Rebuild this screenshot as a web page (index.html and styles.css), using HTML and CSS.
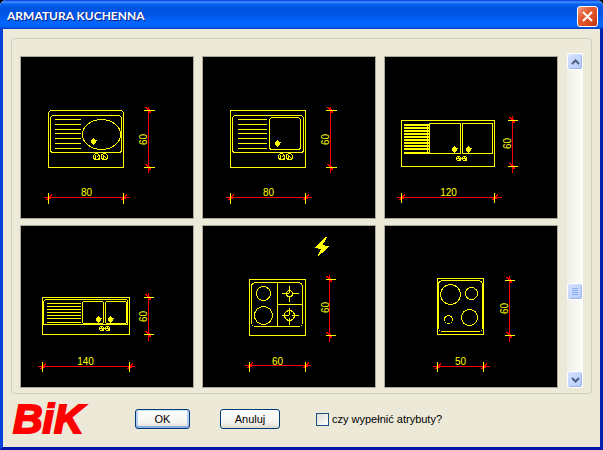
FILE: index.html
```html
<!DOCTYPE html>
<html lang="pl">
<head>
  <meta charset="UTF-8">
  <meta name="viewport" content="width=device-width, initial-scale=1">
  <title>ARMATURA KUCHENNA</title>
  <link rel="stylesheet" href="styles.css">
</head>
<body>

  <!-- shared drawing symbols -->
  <svg class="symbols" width="0" height="0" aria-hidden="true">
    <defs>
      <g id="drain">
        <path d="M0 -3V4M-1 -2V3M1 -2V3M-2 -1V2M-3 0H3M2 -1V2" />
      </g>
      <g id="taps">
        <circle cx="-4" cy="0" r="3" />
        <circle cx="4" cy="0" r="3" />
        <path d="M-5 -2V2M-4 1L-2 -1M3 -2V2M4 0L6 2M-1 -2V3M1 -3V2" />
      </g>
      <g id="taps-small">
        <circle cx="-3" cy="0" r="2" />
        <circle cx="3" cy="0" r="2" />
        <path d="M-5 0H5M-4 -2L-1 2M2 -2L5 2M-4 2H-1M2 2H5" />
      </g>
      <g id="tick">
        <path d="M-3 3L3 -3M-2 3L3 -2M-2 1H2" />
      </g>
      <g id="tick-v">
        <path d="M-3 -3L3 3M-2 -3L3 2M1 -2V2" />
      </g>
    </defs>
  </svg>

  <div class="window">
    <header class="titlebar">
      <h1 class="title">ARMATURA KUCHENNA</h1>
      <button type="button" class="close" aria-label="Zamknij">
        <svg width="19" height="19" viewBox="0 0 19 19"><path d="M5 5L14 14M14 5L5 14" /></svg>
      </button>
    </header>

    <main class="content">
      <div class="group">
        <div class="tiles">

          <div class="tile">
            <svg viewBox="0.5 0.5 172 161">
              <path d="M28 111V56L30 54H101L103 56V111Z" />
              <rect x="30" y="59" width="71" height="37" rx="3" />
              <path d="M34 63H60M34 68H60M34 73H60M34 77H60M34 82H60M34 87H60M34 92H60" />
              <ellipse cx="81" cy="78" rx="19" ry="15" />
              <use href="#drain" x="73" y="84" />
              <use href="#taps" x="80" y="100" />
              <g class="dim">
                <path d="M23 141H109M128 50V116" />
                <use href="#tick" x="28" y="141" /><use href="#tick" x="103" y="141" />
                <use href="#tick-v" x="128" y="54" /><use href="#tick-v" x="128" y="111" />
              </g>
              <path d="M28 136V147M103 136V147M123 54H134M123 111H134" />
              <text x="66" y="139">80</text>
              <text transform="translate(126 83) rotate(-90)">60</text>
            </svg>
          </div>

          <div class="tile">
            <svg viewBox="0.5 0.5 172 161">
              <rect x="28" y="54" width="75" height="57" />
              <rect x="30" y="59" width="71" height="37" rx="3" />
              <path d="M35 63H64M35 68H64M35 73H64M35 77H64M35 82H64M35 87H64M35 92H64" />
              <rect x="67" y="61" width="31" height="32" rx="3" />
              <use href="#drain" x="75" y="86" />
              <use href="#taps" x="83" y="100" />
              <g class="dim">
                <path d="M23 141H109M128 50V116" />
                <use href="#tick" x="28" y="141" /><use href="#tick" x="103" y="141" />
                <use href="#tick-v" x="128" y="54" /><use href="#tick-v" x="128" y="111" />
              </g>
              <path d="M28 136V147M103 136V147M123 54H134M123 111H134" />
              <text x="66" y="139">80</text>
              <text transform="translate(126 83) rotate(-90)">60</text>
            </svg>
          </div>

          <div class="tile">
            <svg viewBox="0.5 0.5 172 161">
              <rect x="17" y="64" width="93" height="46" />
              <path class="bars" d="M19 68.500H44M19 71.500H44M19 74.500H44M19 77.500H44M19 80.500H44M19 83.500H44M19 86.500H44M19 89.500H44M19 92.500H44M19 96.500H44" />
              <path d="M43 68V97" />
              <rect x="45" y="67" width="31" height="30" rx="1" />
              <rect x="78" y="67" width="30" height="30" rx="1" />
              <use href="#drain" x="70" y="92" />
              <use href="#drain" x="84" y="92" />
              <use href="#taps-small" x="77" y="102" />
              <g class="dim">
                <path d="M12 141H117M128 59V116" />
                <use href="#tick" x="17" y="141" /><use href="#tick" x="110" y="141" />
                <use href="#tick-v" x="128" y="64" /><use href="#tick-v" x="128" y="110" />
              </g>
              <path d="M17 136V146M110 136V146M123 64H133M123 110H133" />
              <text x="64" y="139">120</text>
              <text transform="translate(126 87) rotate(-90)">60</text>
            </svg>
          </div>

          <div class="tile">
            <svg viewBox="0.5 0.5 172 161">
              <rect x="22" y="72" width="87" height="37" />
              <path d="M23 99V76L25 74H106L107 75V99Z" />
              <path d="M26 78H60M26 81H60M26 84H60M26 87H60M26 90H60M26 93H60M26 97H60" />
              <rect x="62" y="76" width="21" height="22" rx="2" />
              <rect x="85" y="76" width="21" height="22" rx="2" />
              <use href="#drain" x="78" y="93" />
              <use href="#drain" x="90" y="93" />
              <use href="#taps-small" x="84" y="103" />
              <g class="dim">
                <path d="M17 141H114M128 67V115" />
                <use href="#tick" x="22" y="141" /><use href="#tick" x="109" y="141" />
                <use href="#tick-v" x="128" y="72" /><use href="#tick-v" x="128" y="109" />
              </g>
              <path d="M22 136V146M109 136V146M123 72H133M123 109H133" />
              <text x="65" y="139">140</text>
              <text transform="translate(126 91) rotate(-90)">60</text>
            </svg>
          </div>

          <div class="tile">
            <svg viewBox="0.5 0.5 172 161">
              <path class="bolt" d="M123 12L113 22L119 23L116 30L126 21L119 20L124 12Z" />
              <rect x="47" y="54" width="56" height="56" />
              <rect x="49" y="57" width="51" height="44" rx="4" />
              <path d="M75 57V101M75 79H100" />
              <circle cx="61" cy="68" r="7" />
              <circle cx="61" cy="90" r="9" />
              <circle cx="87" cy="68" r="3" />
              <circle cx="87" cy="90" r="5" />
              <path d="M79 68H86M89 68H96M87 60V67M87 70V76M79 90H86M89 90H96M87 82V89M87 92V99" />
              <g class="dim">
                <path d="M42 140H108M127 49V116" />
                <use href="#tick" x="47" y="140" /><use href="#tick" x="103" y="140" />
                <use href="#tick-v" x="127" y="54" /><use href="#tick-v" x="127" y="110" />
              </g>
              <path d="M47 136V146M103 136V146M123 54H133M123 110H133" />
              <text x="75" y="139">60</text>
              <text transform="translate(126 82) rotate(-90)">60</text>
            </svg>
          </div>

          <div class="tile">
            <svg viewBox="0.5 0.5 172 161">
              <rect x="53" y="53" width="46" height="56" />
              <rect x="54" y="55" width="44" height="51" rx="4" />
              <circle cx="66" cy="69" r="10" />
              <circle cx="87" cy="68" r="6" />
              <circle cx="64" cy="94" r="4" />
              <circle cx="85" cy="92" r="8" />
              <g class="dim">
                <path d="M48 141H105M125 50V116" />
                <use href="#tick" x="53" y="141" /><use href="#tick" x="99" y="141" />
                <use href="#tick-v" x="125" y="55" /><use href="#tick-v" x="125" y="110" />
              </g>
              <path d="M53 136V146M99 136V146M120 55H130M120 110H130" />
              <text x="76" y="139">50</text>
              <text transform="translate(123 83) rotate(-90)">60</text>
            </svg>
          </div>

        </div>

        <div class="scrollbar">
          <button type="button" class="scroll-btn" aria-label="W górę">
            <svg width="9" height="6" viewBox="0 0 9 6"><path class="arrow" d="M1 5L4.500 1.500L8 5" /></svg>
          </button>
          <div class="track-above"></div>
          <button type="button" class="scroll-btn" aria-label="Przewiń">
            <svg width="8" height="8" viewBox="0 0 8 8"><path class="grip" d="M1 0.500H7M1 2.500H7M1 4.500H7M1 6.500H7" /></svg>
          </button>
          <div class="track-below"></div>
          <button type="button" class="scroll-btn" aria-label="W dół">
            <svg width="9" height="6" viewBox="0 0 9 6"><path class="arrow" d="M1 1L4.500 4.500L8 1" /></svg>
          </button>
        </div>
      </div>

      <form class="footer">
        <div class="logo">BiK</div>
        <button type="button" class="btn btn-default">OK</button>
        <button type="button" class="btn btn-cancel">Anuluj</button>
        <input type="checkbox" id="attributes" class="check">
        <label for="attributes">czy wypełnić atrybuty?</label>
      </form>
    </main>
  </div>

</body>
</html>
```

FILE: styles.css
```css
* {
  box-sizing: border-box;
}

body {
  margin: 0;
  background: #000;
  font-family: "Liberation Sans", Arial, sans-serif;
  font-size: 11px;
  color: #000;
}

.symbols {
  display: block;
}

.window {
  display: flex;
  flex-direction: column;
  min-height: 100vh;
  background: #ece9d8;
  border-radius: 6px 6px 0 0;
  overflow: hidden;
}

/* title bar */
.titlebar {
  display: flex;
  align-items: center;
  justify-content: space-between;
  height: 29px;
  padding: 3px 5px 0 7px;
  background: linear-gradient(#0831d9 0, #3a93ff 2px, #0a62ee 4px, #0054e3 8px, #0055e5 14px, #0166ff 22px, #0164fa 26px, #0042c4 29px);
}

.title {
  margin: 0;
  font-family: Lato, "Open Sans", sans-serif;
  font-size: 12px;
  line-height: 20px;
  font-weight: bold;
  color: #fff;
  text-shadow: 1px 1px 0 #0a1883;
}

.close {
  display: block;
  width: 21px;
  height: 21px;
  padding: 0;
  border: 1px solid #fff;
  border-radius: 3px;
  background: linear-gradient(135deg, #f0a088 0, #e45e37 35%, #dc4a20 70%, #b93311 100%);
}

.close svg {
  display: block;
}

.close path {
  stroke: #fff;
  stroke-width: 2;
}

/* dialog body */
.content {
  flex: 1;
  display: flex;
  flex-direction: column;
  padding: 9px 8px 0;
  border: solid #0842da;
  border-width: 0 3px 3px;
  border-right-color: #0020b0;
  border-bottom-color: #0018a8;
}

.group {
  display: flex;
  gap: 9px;
  padding: 14px 8px 5px;
  border: 1px solid #d0d0bf;
  border-radius: 4px;
}

.tiles {
  flex: 1;
  display: grid;
  grid-template-columns: repeat(3, 1fr);
  gap: 6px 8px;
  padding-top: 3px;
}

.tile {
  background: #000;
  border: 1px solid #aca899;
}

.tile svg {
  display: block;
  width: 100%;
  fill: none;
  stroke: #ff0;
  stroke-width: 1;
  shape-rendering: crispEdges;
}

.tile text {
  fill: #ff0;
  stroke: none;
  font-size: 10px;
  text-anchor: middle;
}

.tile .dim {
  stroke: #f00;
}

.tile .bars {
  stroke-width: 2;
}

.tile .bolt {
  fill: #ff0;
}

/* scrollbar */
.scrollbar {
  display: flex;
  flex-direction: column;
  width: 16px;
  background: linear-gradient(to right, #f0efe8, #fefefb);
}

.track-above {
  flex: 214;
}

.track-below {
  flex: 71;
}

.scroll-btn {
  display: flex;
  align-items: center;
  justify-content: center;
  width: 16px;
  height: 17px;
  padding: 0;
  border: 1px solid #fff;
  border-radius: 3px;
  background: linear-gradient(135deg, #d6e2ff, #b5c9fa);
  box-shadow: inset -1px -1px 0 #9db5e8;
}

.arrow {
  fill: none;
  stroke: #4d6185;
  stroke-width: 2;
}

.grip {
  stroke: #8cb0f8;
  shape-rendering: crispEdges;
}

/* footer */
.footer {
  flex: 1;
  display: flex;
  align-items: center;
  padding: 0 0 3px 2px;
}

.logo {
  width: 122px;
  font-size: 41px;
  line-height: 42px;
  font-weight: bold;
  font-style: italic;
  color: #f00;
  -webkit-text-stroke: 2px #f00;
}

.btn {
  height: 20px;
  padding: 0;
  border: 1px solid #003c74;
  border-radius: 3px;
  background: linear-gradient(#fff, #f4f3ee 70%, #dcd8cc);
  font: inherit;
  color: #000;
}

.btn-default {
  width: 55px;
  box-shadow: inset 0 1px 0 #cee7ff, inset 0 -2px 0 #89ade4, inset 2px 0 0 #b4cdf4, inset -2px 0 0 #b4cdf4;
}

.btn-cancel {
  width: 60px;
  margin: 0 36px 0 30px;
}

.check {
  appearance: none;
  width: 13px;
  height: 13px;
  margin: 0 3px 0 0;
  border: 1px solid #1c5180;
  background: linear-gradient(135deg, #dcdcd7, #fff);
}
```
